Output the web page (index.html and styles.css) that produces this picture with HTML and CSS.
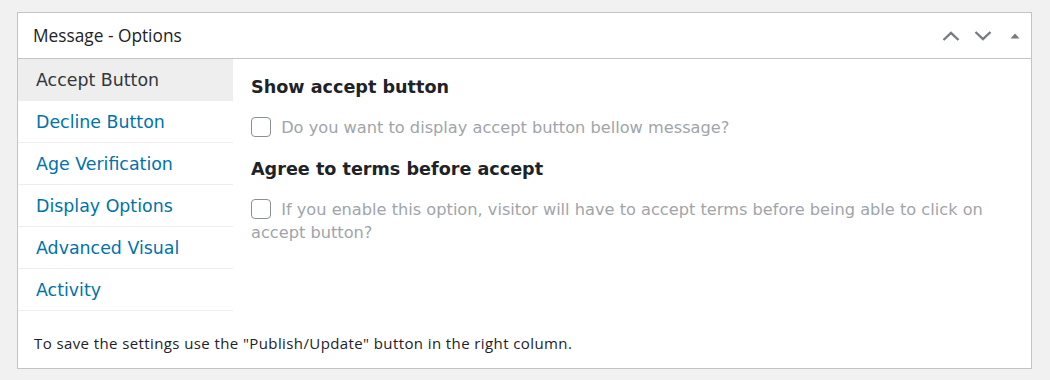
FILE: index.html
```html
<!DOCTYPE html>
<html lang="en">
<head>
    <meta charset="UTF-8">
    <title>Message - Options</title>
    <link rel="stylesheet" href="styles.css">
</head>
<body>
    <div class="postbox">
        <div class="postbox-header">
            <h2 class="hndle">Message - Options</h2>
            <div class="handle-actions">
                <button class="handle-btn" aria-label="Move up">
                    <svg width="20" height="20" viewBox="0 0 20 20"><path d="M2.5 14 L10 6.8 L17.5 14" fill="none" stroke="currentColor" stroke-width="2.4"/></svg>
                </button>
                <button class="handle-btn" aria-label="Move down">
                    <svg width="20" height="20" viewBox="0 0 20 20"><path d="M2.5 6 L10 13.2 L17.5 6" fill="none" stroke="currentColor" stroke-width="2.4"/></svg>
                </button>
                <button class="handle-btn toggle" aria-label="Toggle panel">
                    <svg width="12" height="12" viewBox="0 0 12 12"><path d="M1.5 8.5 L6 3.5 L10.5 8.5 Z" fill="currentColor"/></svg>
                </button>
            </div>
        </div>
        <div class="inside">
            <div class="tabs-wrap">
                <ul class="tabs">
                    <li class="active"><a href="#">Accept Button</a></li>
                    <li><a href="#">Decline Button</a></li>
                    <li><a href="#">Age Verification</a></li>
                    <li><a href="#">Display Options</a></li>
                    <li><a href="#">Advanced Visual</a></li>
                    <li><a href="#">Activity</a></li>
                </ul>
                <div class="tab-panel">
                    <h3 class="field-title">Show accept button</h3>
                    <label class="field-check">
                        <input type="checkbox"> Do you want to display accept button bellow message?
                    </label>
                    <h3 class="field-title">Agree to terms before accept</h3>
                    <label class="field-check">
                        <input type="checkbox"> If you enable this option, visitor will have to accept terms before being able to click on accept button?
                    </label>
                </div>
            </div>
            <p class="note">To save the settings use the "Publish/Update" button in the right column.</p>
        </div>
    </div>
</body>
</html>
```

FILE: styles.css
```css
body {
    margin: 0;
    padding: 12px 18px 0 17px;
    background-color: #f1f1f1;
    font-family: "DejaVu Sans", Verdana, sans-serif;
    color: #1d2327;
}
.postbox {
    background-color: #fff;
    border: 1px solid #c3c4c7;
    height: 357px;
    box-sizing: border-box;
    display: flex;
    flex-direction: column;
}
.postbox-header {
    display: flex;
    align-items: center;
    justify-content: space-between;
    height: 45px;
    border-bottom: 1px solid #c3c4c7;
}
.hndle {
    margin: 0;
    padding-left: 15px;
    font-family: "Open Sans", "Noto Sans", sans-serif;
    font-size: 17.3px;
    font-weight: 400;
    color: #1d2327;
}
.handle-actions {
    display: flex;
    align-items: center;
}
.handle-btn {
    border: 0;
    background: none;
    padding: 0;
    width: 32px;
    height: 36px;
    display: flex;
    align-items: center;
    justify-content: center;
    color: #787c82;
}
.inside {
    flex: 1;
    display: flex;
    flex-direction: column;
}
.tabs-wrap {
    display: flex;
}
.tabs {
    list-style: none;
    margin: 0;
    padding: 0;
    width: 215px;
    flex-shrink: 0;
}
.tabs li {
    height: 41px;
    border-bottom: 1px solid #eee;
    display: flex;
    align-items: center;
}
.tabs li.active {
    background-color: #eee;
}
.tabs a {
    padding-left: 18px;
    font-size: 17.4px;
    color: #0073aa;
    text-decoration: none;
}
.tabs li.active a {
    color: #32373c;
}
.tab-panel {
    flex: 1;
    padding: 16px 18px 18px;
    border-bottom-left-radius: 8px;
    align-self: flex-start;
}
.field-title {
    margin: 2px 0 19px;
    font-size: 17.6px;
    font-weight: bold;
    color: #1d2327;
}
.field-check {
    display: block;
    margin-bottom: 20px;
    font-size: 16.2px;
    line-height: 23px;
    color: #a0a5aa;
}
.field-check input {
    appearance: none;
    width: 20px;
    height: 20px;
    margin: 0 5px 0 0;
    border: 1px solid #8c8f94;
    border-radius: 4px;
    vertical-align: -4px;
    background: #fff;
}
.note {
    margin: auto 0 15px;
    padding-left: 16px;
    font-family: "Open Sans", "Noto Sans", sans-serif;
    font-size: 15px;
    letter-spacing: 0.4px;
    color: #1d2327;
}
```
